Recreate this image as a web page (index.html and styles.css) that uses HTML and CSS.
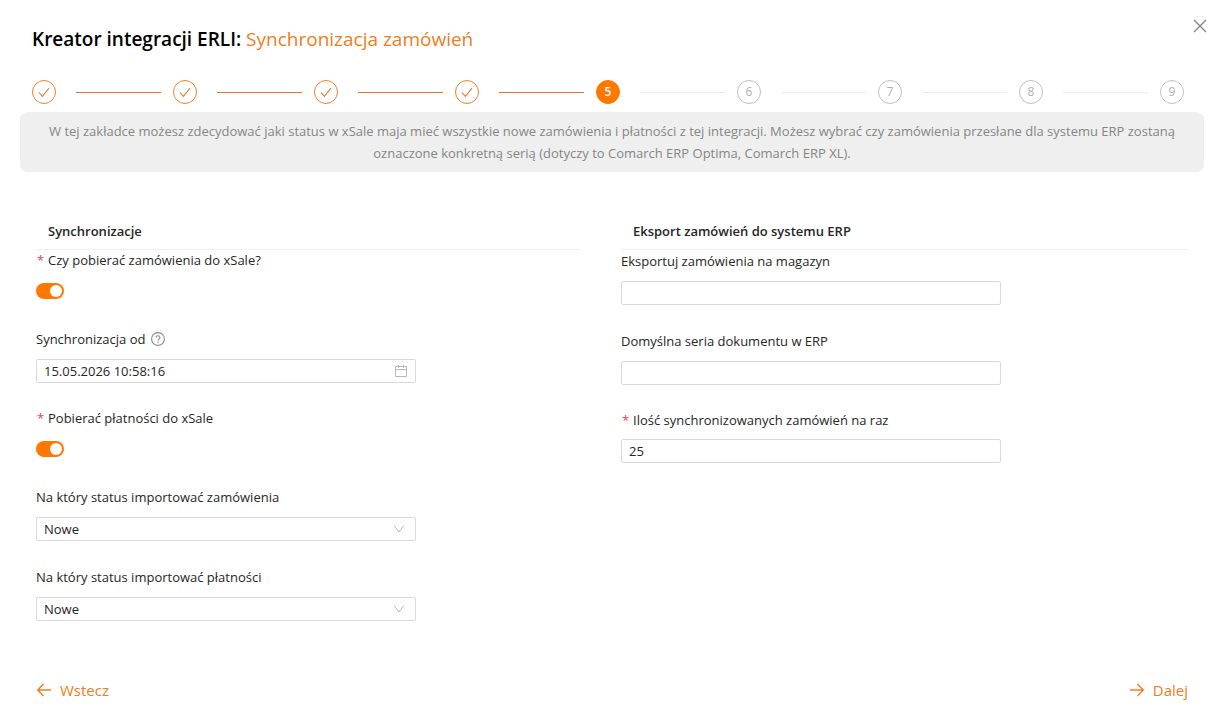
FILE: index.html
```html
<!DOCTYPE html>
<html lang="pl">
<head>
<meta charset="utf-8">
<meta name="viewport" content="width=device-width, initial-scale=1">
<title>Kreator integracji ERLI</title>
<link rel="stylesheet" href="styles.css">
</head>
<body>
<svg class="sprite" aria-hidden="true">
  <symbol id="check" viewBox="0 0 12 12"><path d="M1 6.6 4.4 10.3 11 2.2" fill="none" stroke="currentColor" stroke-width="1.1"/></symbol>
  <symbol id="chevron" viewBox="0 0 12 12"><path d="M1.2 2.4 6 9 10.8 2.4" fill="none" stroke="currentColor" stroke-width="1"/></symbol>
</svg>
<main class="wizard">
  <header class="header">
    <h1 class="title">Kreator integracji ERLI: <span class="title-step">Synchronizacja zamówień</span></h1>
    <button class="close" type="button" aria-label="Zamknij">
      <svg width="14" height="14" viewBox="0 0 14 14"><path d="M1 1 13 13M13 1 1 13" fill="none" stroke="currentColor" stroke-width="1.3"/></svg>
    </button>
  </header>

  <ol class="steps">
    <li class="step done"><span class="dot"><svg width="12" height="12"><use href="#check"/></svg></span></li>
    <li class="step done"><span class="dot"><svg width="12" height="12"><use href="#check"/></svg></span></li>
    <li class="step done"><span class="dot"><svg width="12" height="12"><use href="#check"/></svg></span></li>
    <li class="step done"><span class="dot"><svg width="12" height="12"><use href="#check"/></svg></span></li>
    <li class="step active" aria-current="step"><span class="dot">5</span></li>
    <li class="step"><span class="dot">6</span></li>
    <li class="step"><span class="dot">7</span></li>
    <li class="step"><span class="dot">8</span></li>
    <li class="step"><span class="dot">9</span></li>
  </ol>

  <p class="info">W tej zakładce możesz zdecydować jaki status w xSale maja mieć wszystkie nowe zamówienia i płatności z tej integracji. Możesz wybrać czy zamówienia przesłane dla systemu ERP zostaną oznaczone konkretną serią (dotyczy to Comarch ERP Optima, Comarch ERP XL).</p>

  <form class="form">
    <section class="column">
      <h2 class="heading">Synchronizacje</h2>
      <div class="field">
        <label class="label required" for="orders">Czy pobierać zamówienia do xSale?</label>
        <div class="control"><input class="switch" type="checkbox" role="switch" id="orders" checked></div>
      </div>
      <div class="field">
        <label class="label" for="since">Synchronizacja od
          <svg class="help" width="14" height="14" viewBox="0 0 14 14" fill="none" stroke="currentColor"><circle cx="7" cy="7" r="6.4" stroke-width="1.1"/><path d="M5 5.6C5 4.4 5.9 3.7 7 3.7s2 .7 2 1.8C9 7 7 6.8 7 8.4" stroke-width="1.1"/><path d="M7 9.5v1.2" stroke-width="1.2"/></svg>
        </label>
        <div class="control">
          <input class="input" type="text" id="since" value="15.05.2026 10:58:16">
          <svg class="suffix" width="14" height="14" viewBox="0 0 14 14" fill="none" stroke="currentColor"><path d="M1.5 2.5h11v10h-11zM1.5 5.5h11M4.5 1v3M9.5 1v3"/></svg>
        </div>
      </div>
      <div class="field">
        <label class="label required" for="payments">Pobierać płatności do xSale</label>
        <div class="control"><input class="switch" type="checkbox" role="switch" id="payments" checked></div>
      </div>
      <div class="field">
        <label class="label" for="order-status">Na który status importować zamówienia</label>
        <div class="control">
          <select class="input" id="order-status"><option>Nowe</option></select>
          <svg class="suffix arrow" width="12" height="12"><use href="#chevron"/></svg>
        </div>
      </div>
      <div class="field">
        <label class="label" for="payment-status">Na który status importować płatności</label>
        <div class="control">
          <select class="input" id="payment-status"><option>Nowe</option></select>
          <svg class="suffix arrow" width="12" height="12"><use href="#chevron"/></svg>
        </div>
      </div>
    </section>

    <section class="column">
      <h2 class="heading">Eksport zamówień do systemu ERP</h2>
      <div class="field">
        <label class="label" for="warehouse">Eksportuj zamówienia na magazyn</label>
        <div class="control"><input class="input" type="text" id="warehouse"></div>
      </div>
      <div class="field">
        <label class="label" for="series">Domyślna seria dokumentu w ERP</label>
        <div class="control"><input class="input" type="text" id="series"></div>
      </div>
      <div class="field">
        <label class="label required" for="batch">Ilość synchronizowanych zamówień na raz</label>
        <div class="control"><input class="input" type="text" inputmode="numeric" id="batch" value="25"></div>
      </div>
    </section>
  </form>

  <footer class="footer">
    <button class="nav" type="button">
      <svg width="16" height="16" viewBox="0 0 16 16" fill="none" stroke="currentColor" stroke-width="1.4"><path d="M15 8H2M7.5 2 1.8 8l5.7 6"/></svg>Wstecz
    </button>
    <button class="nav" type="button">
      <svg width="16" height="16" viewBox="0 0 16 16" fill="none" stroke="currentColor" stroke-width="1.4"><path d="M1 8h13M8.5 2l5.7 6-5.7 6"/></svg>Dalej
    </button>
  </footer>
</main>
</body>
</html>
```
FILE: styles.css
```css
:root {
  --accent: #ff7800;
  --accent-dark: #ec7f2e;
  --text: #262626;
  --border: #d9d9d9;
}

* { box-sizing: border-box; }

body {
  margin: 0;
  background: #fff;
  color: var(--text);
  font: 13px/22px "Segoe UI", "Open Sans", "Noto Sans", sans-serif;
}

button, input, select { font: inherit; color: inherit; }

.sprite { display: none; }

.wizard {
  display: flex;
  flex-direction: column;
  padding: 18px 22px 20px 20px;
}

.header {
  display: flex;
  justify-content: space-between;
  padding-left: 12px;
}

.title {
  margin: 5px 0 0;
  color: #000;
  font-size: 19px;
  font-weight: 600;
  line-height: 32px;
}

.title-step { color: #ef7d22; font-weight: 400; }

.close {
  display: flex;
  align-self: flex-start;
  padding: 1px;
  margin-right: -4px;
  border: 0;
  background: none;
  color: #808080;
}

.steps {
  display: flex;
  margin: 25px 20px 8px 12px;
  padding: 0;
  list-style: none;
}

.step { display: flex; flex: 1; align-items: center; }
.step:last-child { flex: none; }

.step:not(:last-child)::after {
  content: "";
  flex: 1;
  height: 1px;
  margin: 0 12px 0 20px;
  background: #ececec;
}

.step.done::after { background: #dc7633; }

.dot {
  display: flex;
  align-items: center;
  justify-content: center;
  width: 24px;
  height: 24px;
  border: 1px solid #bfbfbf;
  border-radius: 50%;
  color: #b0b0b0;
  font-size: 12px;
  line-height: 24px;
}

.done .dot { border-color: var(--accent-dark); color: var(--accent-dark); }

.active .dot {
  border-color: var(--accent);
  background: var(--accent);
  color: #fff;
  font-weight: 600;
}

.info {
  margin: 0;
  padding: 8px 16px;
  border-radius: 8px;
  background: #efefef;
  color: #868686;
  text-align: center;
}

.form {
  display: grid;
  grid-template-columns: 544fr 567fr;
  gap: 41px;
  padding: 48px 16px 0;
}

.column { display: flex; flex-direction: column; min-width: 0; }

.heading {
  margin: 0;
  padding: 0 12px 7px;
  box-shadow: 0 1px #efefef;
  font-size: 13px;
  font-weight: 600;
  line-height: 22px;
}

.field {
  display: flex;
  flex-direction: column;
  gap: 8px;
  padding-bottom: 24px;
}

.label { display: flex; align-items: center; align-self: flex-start; height: 24px; }
.label.required { height: 22px; }

.required::before {
  content: "*";
  width: 11px;
  padding-left: 1px;
  color: #e0454c;
}

.help { margin-left: 6px; color: #8c8c8c; }

.control {
  display: flex;
  align-items: center;
  position: relative;
  width: 380px;
  max-width: 100%;
  height: 24px;
}

.input {
  width: 100%;
  height: 24px;
  padding: 0 7px;
  border: 1px solid var(--border);
  border-radius: 2px;
  background: #fff;
  appearance: none;
}

.suffix {
  position: absolute;
  right: 8px;
  color: #b8b8b8;
  pointer-events: none;
}

.arrow { right: 11px; }

.switch {
  display: flex;
  width: 28px;
  height: 16px;
  margin: 0;
  padding: 2px;
  border-radius: 8px;
  background: #bfbfbf;
  appearance: none;
}

.switch::before {
  content: "";
  width: 12px;
  height: 12px;
  border-radius: 50%;
  background: #fff;
}

.switch:checked { justify-content: flex-end; background: var(--accent); }

.footer {
  display: flex;
  justify-content: space-between;
  padding: 33px 16px 0;
}

.nav {
  display: flex;
  align-items: center;
  gap: 8px;
  padding: 0;
  border: 0;
  background: none;
  color: #ef7d22;
  font-size: 15px;
  line-height: 24px;
}
```
